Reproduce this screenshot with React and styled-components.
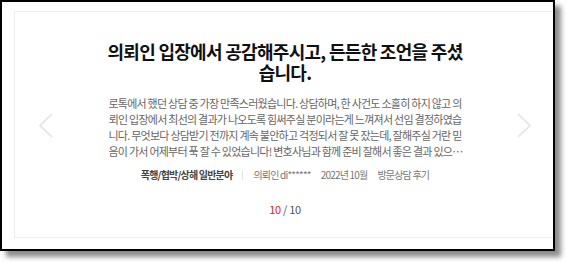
import React from 'react';
import styled, { createGlobalStyle } from 'styled-components';

const GlobalStyle = createGlobalStyle`
    html, body {
        margin: 0;
        padding: 0;
        background: #ffffff;
    }
    body {
        font-family: "Noto Sans CJK KR", "Noto Sans", sans-serif;
    }
`;

const Page = styled.div`
    width: 567px;
    height: 262px;
`;

const Frame = styled.div`
    box-sizing: border-box;
    width: 555px;
    height: 251px;
    border: 2px solid #000;
    background: #fff;
    box-shadow: 6px 6px 5px rgba(0, 0, 0, 0.45);
    overflow: hidden;
`;

const Card = styled.div`
    box-sizing: border-box;
    margin: 9px 0 0 12px;
    width: 543px;
    height: 227px;
    border: 1px solid #eeeeee;
    display: flex;
    align-items: flex-start;
    padding: 0 24px 0 23px;
`;

const Arrow = styled.button`
    flex: none;
    align-self: center;
    margin-top: 2px;
    width: 15px;
    height: 25px;
    padding: 0;
    border: none;
    background: transparent;
    cursor: pointer;
    svg {
        display: block;
    }
`;

const Content = styled.div`
    flex: 1;
    display: flex;
    flex-direction: column;
    align-items: center;
    padding-top: 29px;
`;

const Title = styled.h2`
    margin: 0;
    width: 356px;
    font-size: 18px;
    line-height: 21px;
    font-weight: 700;
    letter-spacing: -0.7px;
    color: #111;
    text-align: center;
    word-break: break-all;
`;

const Body = styled.p`
    margin: 12px 0 0;
    width: 358px;
    font-size: 11px;
    line-height: 16px;
    letter-spacing: -0.75px;
    color: #666;
    text-align: center;
    word-break: break-all;
    display: -webkit-box;
    -webkit-line-clamp: 4;
    -webkit-box-orient: vertical;
    overflow: hidden;
`;

const Meta = styled.div`
    margin-top: 8px;
    display: flex;
    align-items: center;
    font-size: 10px;
    line-height: 16px;
    letter-spacing: -0.8px;
    color: #777;
`;

const MetaItem = styled.span`
    margin-left: ${props => props.first ? '0' : '10px'};
    font-weight: ${props => props.strong ? 700 : 400};
    color: ${props => props.strong ? '#444' : '#777'};
`;

const Divider = styled.span`
    width: 1px;
    height: 9px;
    margin-left: 10px;
    background: #e2e2e2;
`;

const Pager = styled.div`
    margin-top: 18px;
    font-size: 11px;
    line-height: 16px;
    color: #555;
    letter-spacing: -0.3px;
`;

const Current = styled.span`
    color: #e8210f;
`;

function Chevron({ dir }) {
    const pts = dir === 'left' ? '14,1 2,12.5 14,24' : '1,1 13,12.5 1,24';
    return (
        <svg width="15" height="25" viewBox="0 0 15 25">
            <polyline points={pts} fill="none" stroke="#dfe3ec" strokeWidth="1.6" />
        </svg>
    );
}

export default function App() {
    return (
        <Page>
            <GlobalStyle />
            <Frame>
                <Card>
                    <Arrow aria-label="이전"><Chevron dir="left" /></Arrow>
                    <Content>
                        <Title>의뢰인 입장에서 공감해주시고, 든든한 조언을 주셨습니다.</Title>
                        <Body>
                            로톡에서 했던 상담 중 가장 만족스러웠습니다. 상담하며, 한 사건도 소홀히 하지 않고 의뢰인 입장에서 최선의 결과가 나오도록 힘써주실 분이라는게 느껴져서 선임 결정하였습니다. 무엇보다 상담받기 전까지 계속 불안하고 걱정되서 잘 못 잤는데, 잘해주실 거란 믿음이 가서 어제부터 푹 잘 수 있었습니다! 변호사님과 함께 준비 잘해서 좋은 결과 있으면 좋겠습니다.
                        </Body>
                        <Meta>
                            <MetaItem first strong>폭행/협박/상해 일반분야</MetaItem>
                            <Divider />
                            <MetaItem>의뢰인 di******</MetaItem>
                            <MetaItem>2022년 10월</MetaItem>
                            <MetaItem>방문상담 후기</MetaItem>
                        </Meta>
                        <Pager><Current>10</Current> / 10</Pager>
                    </Content>
                    <Arrow aria-label="다음"><Chevron dir="right" /></Arrow>
                </Card>
            </Frame>
        </Page>
    );
}
